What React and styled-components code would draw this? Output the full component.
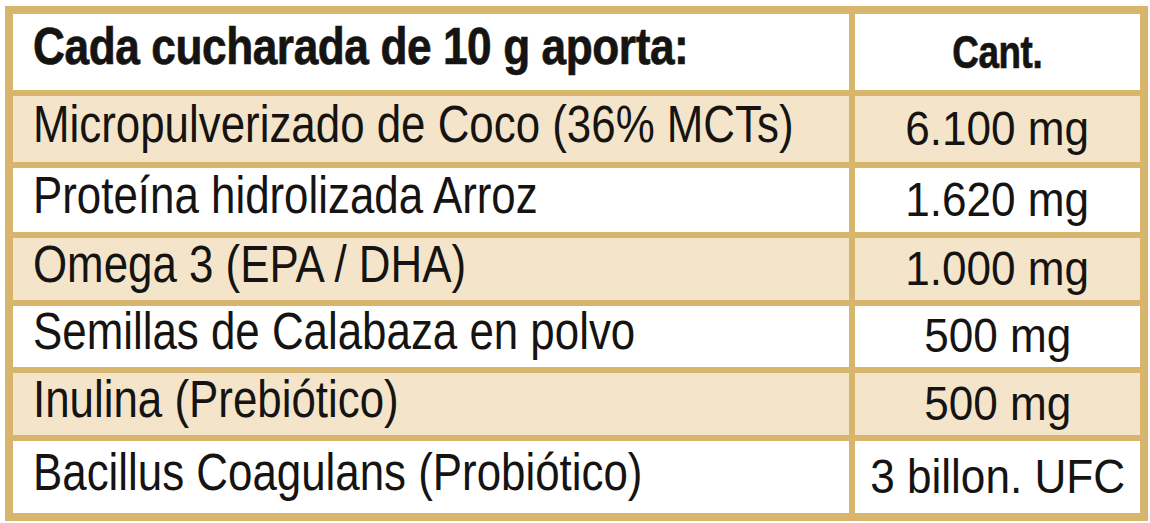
import styled, { createGlobalStyle } from 'styled-components'

const GlobalStyle = createGlobalStyle`
  html, body {
    margin: 0;
    padding: 0;
    background: #ffffff;
  }
  body {
    font-family: "Liberation Sans", Arial, sans-serif;
    color: #161412;
  }
`

const Page = styled.div`
  padding: 6px 0 0 5px;
`

const Table = styled.div`
  display: grid;
  grid-template-columns: 836px 285px;
  grid-template-rows: 76px 66px 64px 62px 61px 62px 72px;
  gap: 6px;
  width: max-content;
  padding: 8px;
  background: #d8b56c;
`

const Cell = styled.div`
  display: flex;
  align-items: center;
  justify-content: ${(p) => (p.$center ? 'center' : 'flex-start')};
  padding: 0 ${(p) => (p.$center ? '0' : '20px')} ${(p) => p.$lift}px;
  background: ${(p) => (p.$shaded ? '#f4e5ca' : '#ffffff')};
  min-width: 0;
  white-space: nowrap;
`

/* condensed face isn't installed, so squeeze the regular one */
const Text = styled.span`
  display: inline-block;
  font-size: ${(p) => p.$size}px;
  font-weight: ${(p) => (p.$bold ? 700 : 400)};
  line-height: 1;
  transform: scaleX(${(p) => p.$squeeze});
  transform-origin: ${(p) => (p.$center ? 'center' : 'left')} center;
  letter-spacing: ${(p) => (p.$bold ? '-0.5px' : '0')};
  -webkit-text-stroke: ${(p) => (p.$bold ? '0.7px currentColor' : '0')};
`

const rows = [
  ['Micropulverizado de Coco (36% MCTs)', '6.100 mg'],
  ['Proteína hidrolizada Arroz', '1.620 mg'],
  ['Omega 3 (EPA / DHA)', '1.000 mg'],
  ['Semillas de Calabaza en polvo', '500 mg'],
  ['Inulina (Prebiótico)', '500 mg'],
  ['Bacillus Coagulans (Probiótico)', '3 billon. UFC'],
]

export default function App() {
  return (
    <>
      <GlobalStyle />
      <Page>
        <Table>
          <Cell $lift={12}>
            <Text $bold $size={52} $squeeze={0.85}>Cada cucharada de 10 g aporta:</Text>
          </Cell>
          <Cell $center $lift={0}>
            <Text $bold $center $size={46} $squeeze={0.8}>Cant.</Text>
          </Cell>
          {rows.map(([name, amount], i) => [
            <Cell key={name} $shaded={i % 2 === 0} $lift={10}>
              <Text $size={51} $squeeze={0.86}>{name}</Text>
            </Cell>,
            <Cell key={name + '-amount'} $shaded={i % 2 === 0} $center $lift={2}>
              <Text $center $size={49} $squeeze={0.9}>{amount}</Text>
            </Cell>,
          ])}
        </Table>
      </Page>
    </>
  )
}
